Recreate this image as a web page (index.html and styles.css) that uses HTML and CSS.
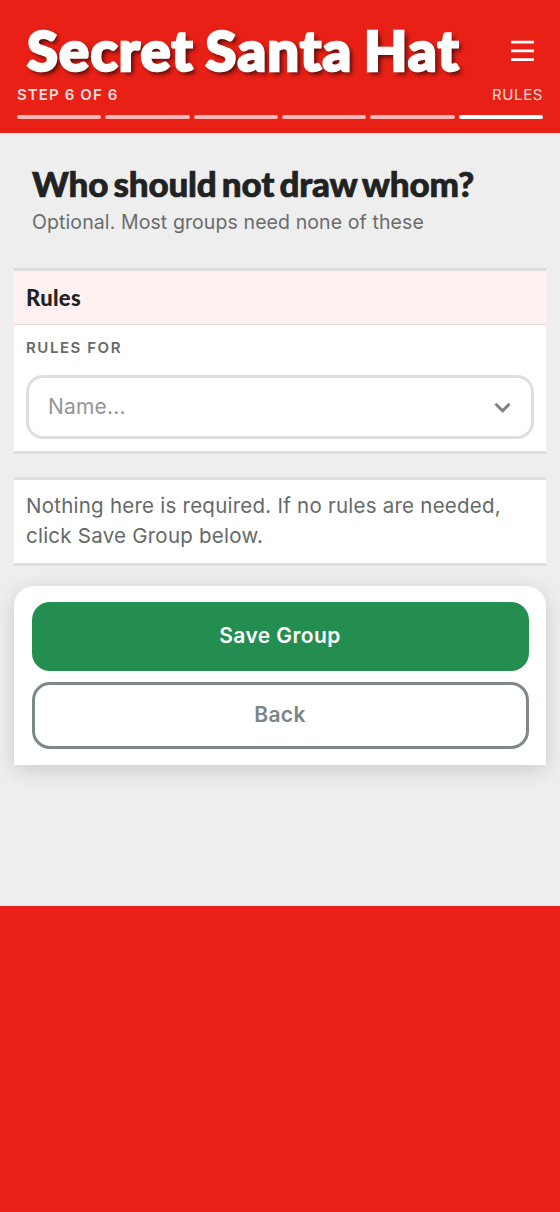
FILE: index.html
```html
<!DOCTYPE html>
<html lang="en">
<head>
<meta charset="utf-8">
<title>Secret Santa Hat</title>
<link rel="stylesheet" href="styles.css">
</head>
<body>
<header class="header">
  <div class="brand-row">
    <span class="brand">Secret Santa Hat</span>
    <button class="menu" aria-label="Menu"><svg width="24" height="22" viewBox="0 0 24 22"><path d="M0 2.1h23M0 10.9h23M0 19.6h23" stroke="#fff" stroke-width="2.7"/></svg></button>
  </div>
  <div class="step-row"><span class="step">STEP 6 OF 6</span><span class="step-name">RULES</span></div>
  <div class="progress"><i class="bar"></i><i class="bar"></i><i class="bar"></i><i class="bar"></i><i class="bar"></i><i class="bar current"></i></div>
</header>
<main class="main">
  <div class="intro">
    <h1 class="title">Who should not draw whom?</h1>
    <p class="subtitle">Optional. Most groups need none of these</p>
  </div>
  <section class="card">
    <h2 class="card-title">Rules</h2>
    <div class="card-body">
      <div class="label">RULES FOR</div>
      <div class="select"><span class="placeholder">Name...</span><svg width="18" height="12" viewBox="0 0 18 12"><path d="M1.5 2.8 8.5 9.8 15.5 2.8" fill="none" stroke="#808483" stroke-width="3"/></svg></div>
    </div>
  </section>
  <section class="card note">Nothing here is required. If no rules are needed,<br>click Save Group below.</section>
  <div class="actions">
    <button class="btn save">Save Group</button>
    <button class="btn back">Back</button>
  </div>
</main>
</body>
</html>
```
FILE: styles.css
```css
* { box-sizing: border-box; }
body { margin: 0; min-height: 1212px; background: #e92016; font-family: Inter, sans-serif; color: #202322; }
h1, h2, p { margin: 0; font-weight: inherit; }
button { font-family: inherit; cursor: pointer; }
.header { height: 133px; padding: 18px 17px 0; background: #e92016; color: #fff; }
.brand-row { height: 64px; display: flex; align-items: center; justify-content: space-between; padding: 0 8px 0 10px; white-space: nowrap; }
.brand { font: 900 56px/62px Lato, sans-serif; letter-spacing: 1.3px; word-spacing: -3px; -webkit-text-stroke: 2.6px #fff; text-shadow: 3px 3px 5px rgba(0,0,0,.75); }
.menu { display: flex; margin-top: 1px; padding: 0; border: 0; background: none; }
.step-row { display: flex; justify-content: space-between; height: 27px; line-height: 26px; font-size: 15px; color: #ffdedc; }
.step { font-weight: 600; letter-spacing: 1.1px; }
.step-name { letter-spacing: .6px; }
.progress { display: grid; grid-template-columns: repeat(6, 1fr); gap: 4px; margin-top: 6px; }
.bar { height: 4px; border-radius: 2px; background: #ffb7b8; }
.current { background: #fff; }
.main { height: 773px; padding: 30px 14px 0; background: #eee; }
.intro { padding-left: 18px; height: 105px; }
.title { font: 900 35px/40px Lato, sans-serif; letter-spacing: -0.2px; word-spacing: -2.8px; -webkit-text-stroke: .7px #202322; white-space: nowrap; }
.subtitle { font-size: 19.5px; line-height: 30px; letter-spacing: .1px; margin-top: 4px; color: #696d6c; white-space: nowrap; }
.card { background: #fff; border: solid #dedede; border-width: 3px 0; }
.card-title { height: 54px; padding-left: 12px; font: 900 22px/54px Lato, sans-serif; letter-spacing: .3px; background: #fff1f1; border-bottom: 1px solid #ebd5d5; }
.card-body { height: 126px; padding: 8px 12px 0; }
.label { height: 30px; font-size: 15px; font-weight: 600; letter-spacing: 1.55px; line-height: 30px; color: #666a69; }
.select { display: flex; justify-content: space-between; align-items: center; height: 64px; margin-top: 12px; padding: 0 19px; border: 3px solid #dedede; border-radius: 17px; }
.placeholder { font-size: 21px; letter-spacing: .2px; margin-top: -2px; color: #969696; }
.note { height: 89px; margin-top: 23px; padding: 11px 12px; font-size: 20.5px; line-height: 30px; letter-spacing: .24px; color: #656968; white-space: nowrap; }
.actions { display: grid; grid-template-rows: 69px 67px; gap: 11px; margin-top: 20px; height: 179px; padding: 16px 17.5px; background: #fff; border-radius: 20px 20px 0 0; box-shadow: 0 5px 22px rgba(0,0,0,.15); }
.btn { border: 0; padding: 0 0 2px; border-radius: 18px; font-size: 21px; letter-spacing: .4px; font-weight: 600; }
.save { background: #248e51; color: #fff; }
.back { background: #fff; border: 3px solid #7d8985; color: #7b8588; }
```
